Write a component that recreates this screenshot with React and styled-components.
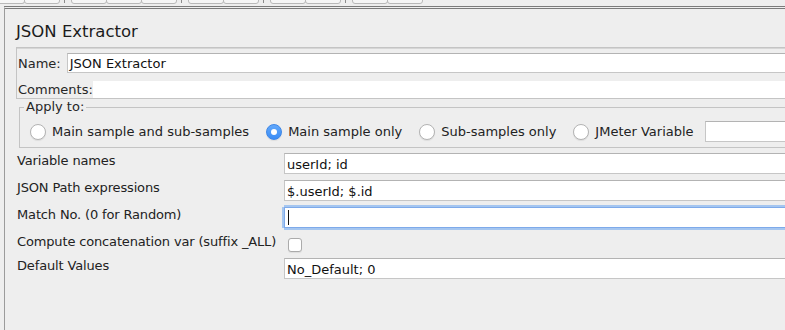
import styled, { createGlobalStyle } from "styled-components";

const GlobalStyle = createGlobalStyle`
  html, body {
    margin: 0;
    padding: 0;
    background: #eeeeee;
    overflow: hidden;
  }
  body {
    font-family: "DejaVu Sans", Verdana, sans-serif;
    font-size: 13px;
    color: #222;
  }
`;

const toolGroups = [2, 3, 2, 2, 2];

const radios = [
  { label: "Main sample and sub-samples", checked: false },
  { label: "Main sample only", checked: true },
  { label: "Sub-samples only", checked: false },
  { label: "JMeter Variable", checked: false },
];

const fields = [
  { label: "Variable names", value: "userId; id" },
  { label: "JSON Path expressions", value: "$.userId; $.id" },
  { label: "Match No. (0 for Random)", value: "", focused: true },
  { label: "Compute concatenation var (suffix _ALL)", checkbox: true },
  { label: "Default Values", value: "No_Default; 0" },
];

function App() {
  return (
    <Page>
      <GlobalStyle />
      <Toolbar>
        {toolGroups.map((count, g) => (
          <ToolGroupWrap key={g}>
            {g > 0 && <ToolSeparator />}
            <ToolGroup>
              {Array.from({ length: count }).map((_, i) => (
                <ToolButton key={i} $cut={g === 0 && i === 0} />
              ))}
            </ToolGroup>
          </ToolGroupWrap>
        ))}
      </Toolbar>

      <Panel>
        <Title>JSON Extractor</Title>

        <NameBox>
          <NameRow>
            <BoxLabel>Name:</BoxLabel>
            <NameField>JSON Extractor</NameField>
          </NameRow>
          <CommentsRow>
            <BoxLabel>Comments:</BoxLabel>
            <CommentsArea />
          </CommentsRow>
        </NameBox>

        <ApplyGroup>
          <Legend>Apply to:</Legend>
          <RadioRow>
            {radios.map((r) => (
              <RadioItem key={r.label}>
                <Radio $checked={r.checked} />
                {r.label}
              </RadioItem>
            ))}
            <VarField />
          </RadioRow>
        </ApplyGroup>

        <FormGrid>
          {fields.map((f) => (
            <FieldRow key={f.label}>
              <FieldLabel>{f.label}</FieldLabel>
              {f.checkbox ? (
                <Checkbox />
              ) : (
                <Field $focused={f.focused}>
                  {f.focused && <Caret />}
                  {f.value}
                </Field>
              )}
            </FieldRow>
          ))}
        </FormGrid>
      </Panel>
    </Page>
  );
}

const Page = styled.div`
  width: 785px;
  height: 330px;
  overflow: hidden;
`;

const Toolbar = styled.div`
  display: flex;
  align-items: flex-end;
  height: 6px;
  padding-bottom: 2px;
  box-sizing: border-box;
  overflow: hidden;
`;

const ToolGroupWrap = styled.div`
  display: flex;
  align-items: flex-end;
  height: 100%;
`;

const ToolGroup = styled.div`
  display: flex;
  align-items: flex-end;
`;

const ToolButton = styled.div`
  width: ${(p) => (p.$cut ? "25px" : "36px")};
  height: 24px;
  box-sizing: border-box;
  background: #f6f6f6;
  border: 1px solid #b9b9b9;
  border-left-width: ${(p) => (p.$cut ? "0" : "1px")};
  border-radius: ${(p) => (p.$cut ? "0 0 3px 0" : "0 0 3px 3px")};

  & + & {
    margin-left: -1px;
  }
`;

const ToolSeparator = styled.div`
  align-self: flex-start;
  width: 1px;
  height: 3px;
  background: #8c8c8c;
  margin: 0 6px 0 4px;
`;

const Panel = styled.section`
  margin-left: 4px;
  min-height: 324px;
  box-sizing: border-box;
  border-top: 3px double #7b7b7b;
  border-left: 1px solid #9b9b9b;
  padding: 13px 0 0 11px;
  background: #eeeeee;
`;

const Title = styled.h1`
  margin: 0 0 5px;
  font-size: 16.5px;
  font-weight: normal;
  line-height: 20px;
  color: #1c1c1c;
`;

const NameBox = styled.div`
  display: flex;
  flex-direction: column;
  gap: 8px;
  border: 1px solid #c4c4c4;
  border-right: none;
  box-shadow: inset 0 1px 0 #d6d6d6;
  padding: 5px 0 0 1px;
`;

const NameRow = styled.div`
  display: flex;
  align-items: center;
  height: 20px;
`;

const CommentsRow = styled.div`
  display: flex;
  align-items: center;
  height: 17px;
`;

const BoxLabel = styled.span`
  line-height: 15px;
  white-space: nowrap;
  color: #262626;
`;

const NameField = styled.div`
  flex: 1;
  height: 20px;
  box-sizing: border-box;
  margin-left: 6px;
  padding: 1px 3px 0 2px;
  line-height: 17px;
  background: #fff;
  border: 1px solid #c6c6c6;
  border-top-color: #b3b3b3;
  border-right: none;
  color: #111;
`;

const CommentsArea = styled.div`
  flex: 1;
  align-self: stretch;
  background: #fff;
`;

const ApplyGroup = styled.fieldset`
  margin: 1px 0 0 3px;
  padding: 0;
  min-width: 0;
  border: 1px solid #c4c4c4;
  border-right: none;
`;

const Legend = styled.legend`
  margin-left: 4px;
  padding: 0 2px;
  line-height: 14px;
  color: #262626;
`;

const RadioRow = styled.div`
  display: flex;
  align-items: center;
  height: 21px;
  padding: 7px 0 5px 10px;
`;

const RadioItem = styled.label`
  display: flex;
  align-items: center;
  gap: 6px;
  white-space: nowrap;
  line-height: 15px;
  color: #222;

  & + & {
    margin-left: 17px;
  }
`;

const Radio = styled.span`
  position: relative;
  width: 16px;
  height: 16px;
  box-sizing: border-box;
  border-radius: 50%;
  flex-shrink: 0;
  background: ${(p) =>
    p.$checked ? "linear-gradient(#62a8fb, #3a8cf5)" : "#fff"};
  border: 1px solid ${(p) => (p.$checked ? "#3d86e6" : "#b3b3b3")};
  box-shadow: 0 1px 1px rgba(0, 0, 0, 0.08);

  &::after {
    content: "";
    display: ${(p) => (p.$checked ? "block" : "none")};
    position: absolute;
    left: 50%;
    top: 50%;
    width: 6px;
    height: 6px;
    margin: -3px 0 0 -3px;
    border-radius: 50%;
    background: #fff;
  }
`;

const VarField = styled.div`
  flex: 1;
  min-width: 0;
  height: 21px;
  box-sizing: border-box;
  margin-left: 11px;
  background: #fff;
  border: 1px solid #c6c6c6;
  border-top-color: #b3b3b3;
  border-right: none;
`;

const FormGrid = styled.div`
  display: grid;
  grid-template-rows: 21px 21px 21px 18px 21px;
  row-gap: 6px;
  margin-top: 5px;
  padding-left: 1px;
`;

const FieldRow = styled.div`
  display: grid;
  grid-template-columns: 267px 1fr;
  align-items: start;
`;

const FieldLabel = styled.span`
  line-height: 15px;
  letter-spacing: -0.15px;
  white-space: nowrap;
  color: #222;
`;

const Field = styled.div`
  display: flex;
  align-items: center;
  height: 21px;
  box-sizing: border-box;
  padding: 2px 3px 0 2px;
  line-height: 17px;
  white-space: nowrap;
  background: #fff;
  color: #111;
  border: 1px solid ${(p) => (p.$focused ? "#7eaaea" : "#c6c6c6")};
  border-top-color: ${(p) => (p.$focused ? "#7eaaea" : "#b3b3b3")};
  border-right: none;
  box-shadow: ${(p) =>
    p.$focused
      ? "0 2px 0 0 rgba(140, 184, 240, 0.75), 0 -2px 0 0 rgba(140, 184, 240, 0.75), -2px 0 0 0 rgba(140, 184, 240, 0.75)"
      : "none"};
`;

const Caret = styled.span`
  width: 1px;
  height: 15px;
  margin: -2px 0 0 1px;
  background: #111;
`;

const Checkbox = styled.span`
  width: 14px;
  height: 14px;
  box-sizing: border-box;
  margin: 4px 0 0 4px;
  background: #fff;
  border: 1px solid #ababab;
  border-radius: 3px;
  box-shadow: 0 1px 1px rgba(0, 0, 0, 0.07);
`;

export default App;
